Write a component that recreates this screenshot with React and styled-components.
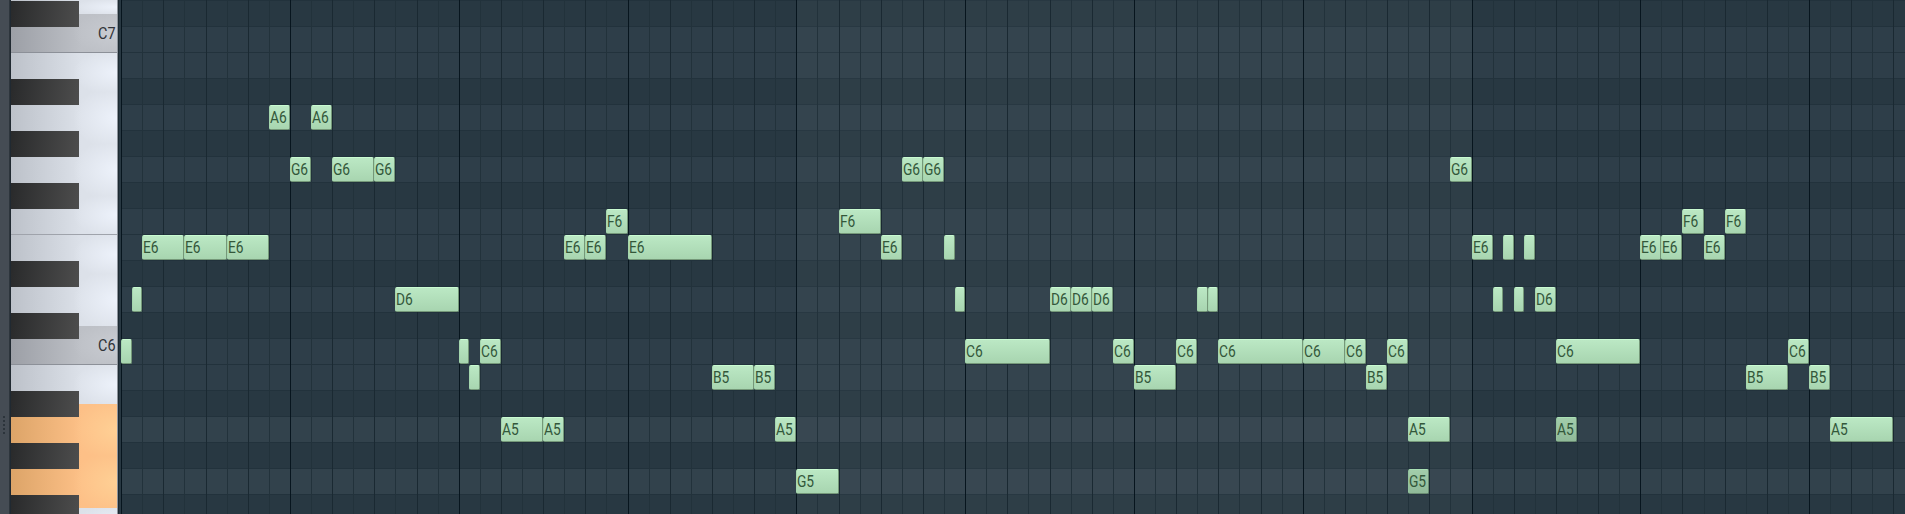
import React from 'react';
import styled, { createGlobalStyle } from 'styled-components';

const Global = createGlobalStyle`
  body { margin: 0; background: #283842; overflow: hidden; }
  * { box-sizing: border-box; }
`;

const ROW = 26;
const stepX = (k) => Math.round(0.2 + 21.0985 * k);

const PITCHES = ['C#7', 'C7', 'B6', 'A#6', 'A6', 'G#6', 'G6', 'F#6', 'F6', 'E6', 'D#6', 'D6', 'C#6', 'C6', 'B5', 'A#5', 'A5', 'G#5', 'G5', 'F#5'];
const SCALE_HINT = ['A5', 'G5'];

// [pitch, start step, length in steps, muted]
const NOTES = [
  ['C6', 0, 0.5], ['D6', 0.5, 0.5], ['E6', 1, 2], ['E6', 3, 2], ['E6', 5, 2],
  ['A6', 7, 1], ['G6', 8, 1], ['A6', 9, 1], ['G6', 10, 2], ['G6', 12, 1], ['D6', 13, 3],
  ['C6', 16, 0.5], ['B5', 16.5, 0.5], ['C6', 17, 1], ['A5', 18, 2], ['A5', 20, 1],
  ['E6', 21, 1], ['E6', 22, 1], ['F6', 23, 1], ['E6', 24, 4], ['B5', 28, 2], ['B5', 30, 1],
  ['A5', 31, 1], ['G5', 32, 2], ['F6', 34, 2], ['E6', 36, 1], ['G6', 37, 1], ['G6', 38, 1],
  ['E6', 39, 0.5], ['D6', 39.5, 0.5], ['C6', 40, 4], ['D6', 44, 1], ['D6', 45, 1], ['D6', 46, 1],
  ['C6', 47, 1], ['B5', 48, 2], ['C6', 50, 1], ['D6', 51, 0.5], ['D6', 51.5, 0.5],
  ['C6', 52, 4], ['C6', 56, 2], ['C6', 58, 1], ['B5', 59, 1], ['C6', 60, 1], ['A5', 61, 2],
  ['G5', 61, 1, true], ['G6', 63, 1], ['E6', 64, 1], ['D6', 65, 0.5], ['E6', 65.5, 0.5],
  ['D6', 66, 0.5], ['E6', 66.5, 0.5], ['D6', 67, 1], ['C6', 68, 4], ['A5', 68, 1, true],
  ['E6', 72, 1], ['E6', 73, 1], ['F6', 74, 1], ['E6', 75, 1], ['F6', 76, 1],
  ['B5', 77, 2], ['C6', 79, 1], ['B5', 80, 1], ['A5', 81, 3],
];

const WHITE_KEYS = [
  { h: 14, line: false }, { h: 39, label: 'C7', tone: 'gray', line: true },
  { h: 39 }, { h: 52 }, { h: 52 }, { h: 39, line: true }, { h: 39 }, { h: 52 },
  { h: 39, label: 'C6', tone: 'gray', line: true }, { h: 39 },
  { h: 52, tone: 'orange' }, { h: 52, tone: 'orange' }, { h: 39 },
];
const BLACK_KEYS = [1, 79, 131, 183, 261, 313, 391, 443, 495];

const Editor = styled.main`
  display: flex;
  width: 1905px;
  height: 514px;
  overflow: hidden;
  background: #283842;
`;

const Handle = styled.aside`
  flex: none;
  width: 11px;
  height: 100%;
  padding: 416px 0 0 3px;
  background: linear-gradient(90deg, #454c54 0 9px, #2d353c 9px 10px, #202931 10px);
  display: flex;
  flex-direction: column;
  gap: 2px;
`;

const Grip = styled.i`
  flex: none;
  width: 2px;
  height: 2px;
  background: #2c343b;
`;

const Keyboard = styled.section`
  position: relative;
  flex: none;
  width: 107px;
  height: 100%;
  display: flex;
  flex-direction: column;
  border-right: 1px solid #8d949c;
`;

const tones = {
  white: ['#bcc1c9', '#dce1e9', '#edf2fb', '#9fa3ab'],
  gray: ['#9c9fa6', '#bdc0c6', '#c9ccd2', '#8c9098'],
  orange: ['#dca468', '#fdc087', '#ffd095', '#b98a58'],
};

const WhiteKey = styled.div`
  flex: none;
  height: ${(p) => p.$h}px;
  display: flex;
  justify-content: flex-end;
  align-items: flex-end;
  padding: 0 1px 8px 0;
  border-bottom: ${(p) => (p.$line ? `1px solid ${tones[p.$tone][3]}` : '0')};
  background:
    radial-gradient(ellipse 44px 62% at 100% 50%, ${(p) => tones[p.$tone][2]}, transparent),
    linear-gradient(90deg, ${(p) => tones[p.$tone][0]}, ${(p) => tones[p.$tone][1]} 70px);
`;

const KeyLabel = styled.span`
  font: 17px/21px Roboto, 'Liberation Sans', sans-serif;
  color: #303338;
  transform: scaleX(0.85);
  transform-origin: right center;
`;

const BlackKey = styled.div`
  position: absolute;
  left: 0;
  top: ${(p) => p.$y}px;
  width: 68px;
  height: 26px;
  background: linear-gradient(97deg, #292a2b, #4d4d4d);
`;

const Gutter = styled.div`
  flex: none;
  width: 3px;
  height: 100%;
  background: linear-gradient(90deg, #1c2931 0 1px, #293943 1px);
`;

const Roll = styled.section`
  position: relative;
  flex: 1;
  height: 100%;
  overflow: hidden;
`;

const Lane = styled.div`
  position: relative;
  height: ${ROW}px;
  border-top: 1px solid #22323c;
  background: ${(p) => (p.$hint ? '#32424c' : p.$sharp ? '#283842' : '#2e3e49')};
`;

const Steps = styled.div`
  position: absolute;
  inset: 0;
  display: flex;
`;

const lineColors = { bar: '#07151e', even: '#1a2932', odd: '#22323b' };

const Step = styled.div`
  flex: none;
  height: 100%;
  width: ${(p) => p.$w}px;
  border-left: 1px solid ${(p) => lineColors[p.$kind]};
  background: ${(p) => (p.$lit ? 'rgba(255, 255, 255, 0.03)' : 'transparent')};
`;

const NoteBox = styled.div`
  position: absolute;
  left: ${(p) => p.$x}px;
  top: ${(p) => p.$y}px;
  width: ${(p) => p.$w}px;
  height: 25px;
  padding-left: 0.4px;
  overflow: hidden;
  border: 1px solid;
  border-color: ${(p) => (p.$muted ? '#a9e0b4 #6a8c72 #6a8c72 #93c29d' : '#c9fbd1 #759879 #759879 #a5d6ae')};
  border-radius: 2px;
  background: ${(p) => (p.$muted ? 'linear-gradient(#a2cdab, #90ba99)' : 'linear-gradient(#bbe8c4, #a8d5b0)')};
`;

const NoteLabel = styled.span`
  display: block;
  width: max-content;
  font: 16px/24px Roboto, 'Liberation Sans', sans-serif;
  color: #33573a;
  transform: scaleX(0.86);
  transform-origin: left center;
`;

function Note({ data: [pitch, start, length, muted] }) {
  const x = stepX(start);
  return (
    <NoteBox $x={x} $y={PITCHES.indexOf(pitch) * ROW + 1} $w={stepX(start + length) - x} $muted={muted}>
      {length >= 1 && <NoteLabel>{pitch}</NoteLabel>}
    </NoteBox>
  );
}

export default function App() {
  return (
    <Editor>
      <Global />
      <Handle>
        {[0, 1, 2, 3, 4].map((i) => <Grip key={i} />)}
      </Handle>
      <Keyboard>
        {WHITE_KEYS.map((key, i) => (
          <WhiteKey key={i} $h={key.h} $tone={key.tone || 'white'} $line={key.line}>
            {key.label && <KeyLabel>{key.label}</KeyLabel>}
          </WhiteKey>
        ))}
        {BLACK_KEYS.map((y) => <BlackKey key={y} $y={y} />)}
      </Keyboard>
      <Gutter />
      <Roll>
        {PITCHES.map((p) => (
          <Lane key={p} $sharp={p.includes('#')} $hint={SCALE_HINT.includes(p)} />
        ))}
        <Steps>
          {Array.from({ length: 85 }, (_, k) => (
            <Step
              key={k}
              $w={stepX(k + 1) - stepX(k)}
              $kind={k % 8 === 0 ? 'bar' : k % 2 === 0 ? 'even' : 'odd'}
              $lit={k >= 32 && k < 64}
            />
          ))}
        </Steps>
        {NOTES.map((n, i) => <Note key={i} data={n} />)}
      </Roll>
    </Editor>
  );
}
